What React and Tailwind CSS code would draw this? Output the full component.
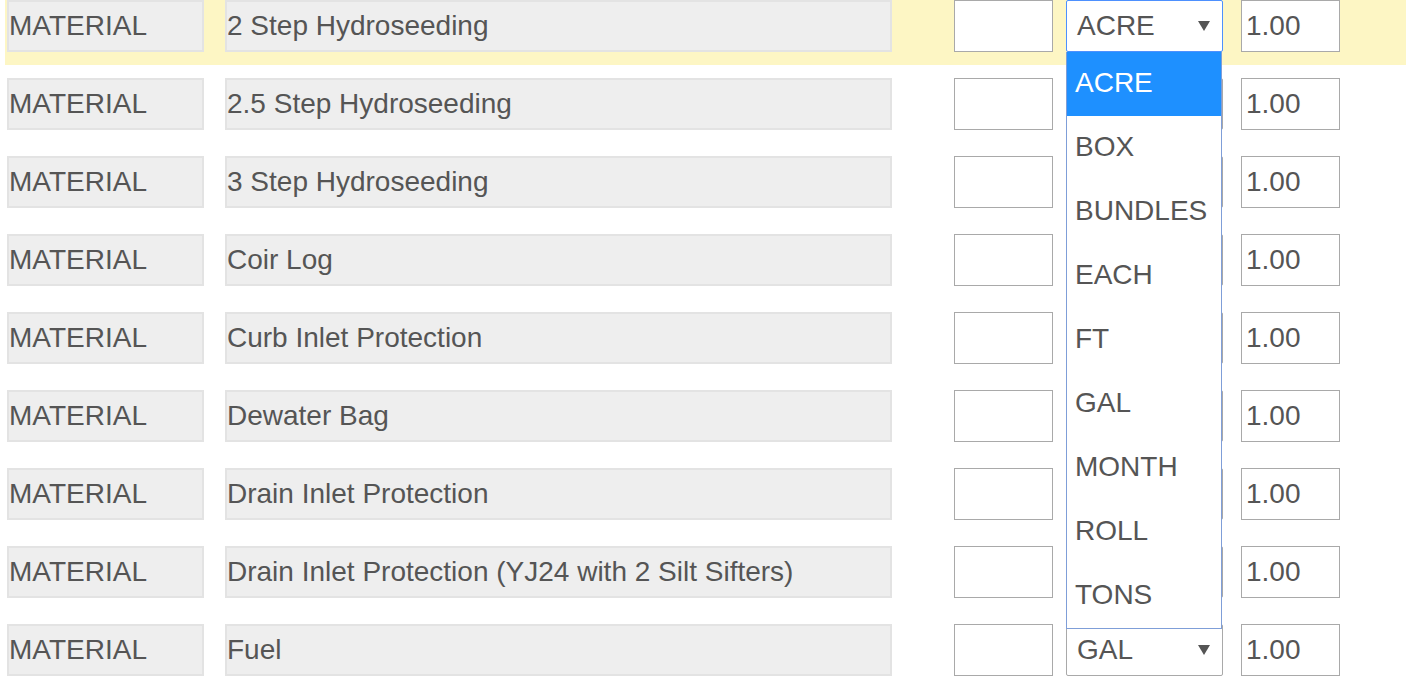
import React from 'react'

const rows = [
  { name: '2 Step Hydroseeding', unit: 'ACRE', open: true },
  { name: '2.5 Step Hydroseeding', unit: '' },
  { name: '3 Step Hydroseeding', unit: '' },
  { name: 'Coir Log', unit: '' },
  { name: 'Curb Inlet Protection', unit: '' },
  { name: 'Dewater Bag', unit: '' },
  { name: 'Drain Inlet Protection', unit: '' },
  { name: 'Drain Inlet Protection (YJ24 with 2 Silt Sifters)', unit: '' },
  { name: 'Fuel', unit: 'GAL' },
]

const units = ['ACRE', 'BOX', 'BUNDLES', 'EACH', 'FT', 'GAL', 'MONTH', 'ROLL', 'TONS']

function Arrow() {
  return (
    <svg width="12" height="10" viewBox="0 0 12 10" className="shrink-0">
      <polygon points="0,0 12,0 6,10" fill="#555555" />
    </svg>
  )
}

// rows hidden behind the open list keep only their box
function Select({ value, open }) {
  return (
    <div className="relative w-[157px] h-[52px] shrink-0">
      <div
        className={`h-full flex items-center justify-between pl-[10px] pr-[12px] bg-white rounded-[2px] border ${
          open ? 'border-[#4d90fe]' : 'border-[#a9a9a9]'
        }`}
      >
        <span>{value}</span>
        {value && <Arrow />}
      </div>
      {open && (
        <ul className="absolute left-0 top-[52px] w-[156px] z-10 bg-white border border-t-0 border-[#7f9ed8]">
          {units.map((u) => (
            <li
              key={u}
              className={`h-[64px] flex items-center pl-[8px] pb-[2px] ${
                u === value ? 'bg-[#1e90ff] text-white' : ''
              }`}
            >
              {u}
            </li>
          ))}
        </ul>
      )}
    </div>
  )
}

export default function App() {
  return (
    <div
      className="h-[684px] overflow-hidden bg-white text-[#555555] text-[28px] leading-none"
      style={{ fontFamily: '"Liberation Sans", Arial, sans-serif' }}
    >
      <div className="ml-[5px]">
        {rows.map((row, i) => (
          <div
            key={i}
            className={`h-[65px] mb-[13px] pl-[2px] flex items-start ${row.open ? 'bg-[#fdf6c4] relative z-10' : ''}`}
          >
            <div className="w-[197px] h-[52px] shrink-0 flex items-center bg-[#eeeeee] border-2 border-[#e3e3e3]">
              MATERIAL
            </div>
            <div className="w-[667px] h-[52px] shrink-0 ml-[21px] flex items-center bg-[#eeeeee] border-2 border-[#e3e3e3]">
              {row.name}
            </div>
            <div className="w-[99px] h-[52px] shrink-0 ml-[62px] bg-white border border-[#a9a9a9]" />
            <div className="ml-[13px]">
              <Select value={row.unit} open={row.open} />
            </div>
            <div className="w-[99px] h-[52px] shrink-0 ml-[18px] flex items-center pl-[4px] bg-white border border-[#a9a9a9]">
              1.00
            </div>
          </div>
        ))}
      </div>
    </div>
  )
}
